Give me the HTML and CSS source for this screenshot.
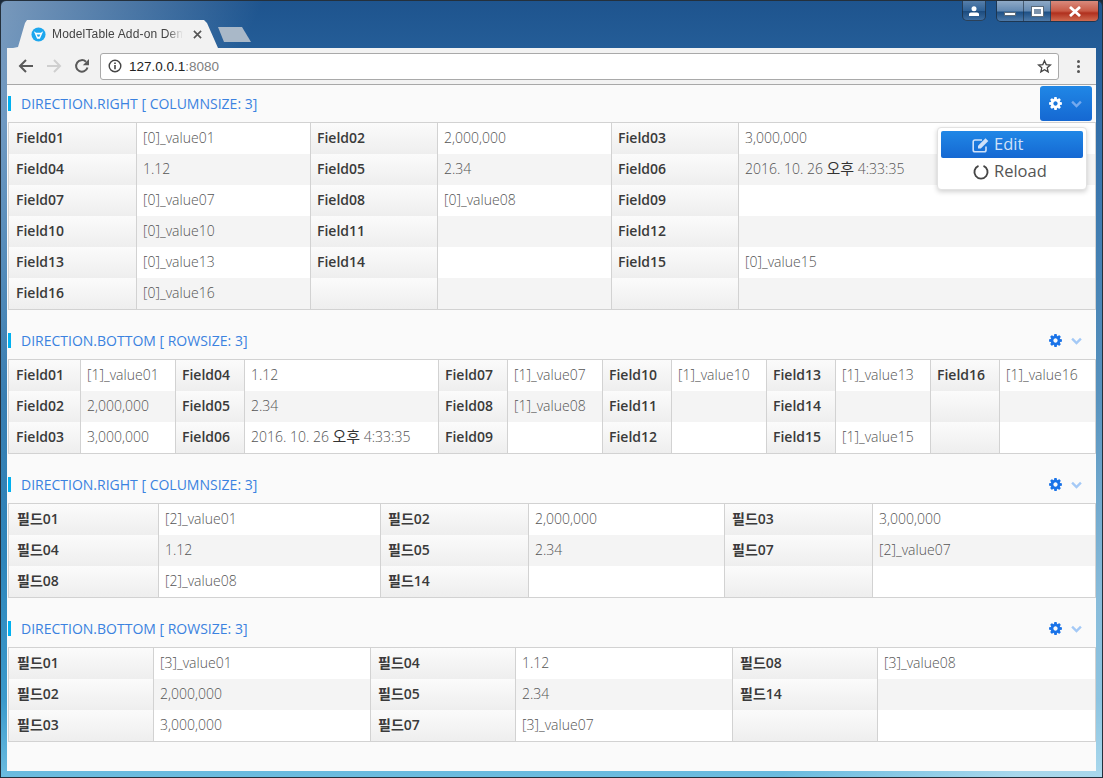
FILE: index.html
```html
<!DOCTYPE html>
<html lang="ko">
<head>
    <meta charset="UTF-8">
    <title>ModelTable Add-on Demo</title>
    <link rel="stylesheet" href="styles.css">
</head>
<body>
    <svg class="defs" width="0" height="0">
        <symbol id="cog" viewBox="0 0 1792 1792"><path d="M1152 896q0-106-75-181t-181-75-181 75-75 181 75 181 181 75 181-75 75-181zm512-109v222q0 12-8 23t-20 13l-185 28q-19 54-39 91 35 50 107 138 10 12 10 25t-9 23q-27 37-99 108t-94 71q-12 0-26-9l-138-108q-44 23-91 38-16 136-29 186-7 28-36 28h-222q-14 0-24.500-8.500t-11.500-21.500l-28-184q-49-16-90-37l-141 107q-10 9-25 9-14 0-25-11-126-114-165-168-7-10-7-23 0-12 8-23 15-21 51-66.500t54-70.500q-27-50-41-99l-183-27q-13-2-21-12.500t-8-23.500v-222q0-12 8-23t19-13l186-28q14-46 39-92-40-57-107-138-10-12-10-24 0-10 9-23 26-36 98.500-107.500t94.500-71.500q13 0 26 10l138 107q44-23 91-38 16-136 29-186 7-28 36-28h222q14 0 24.500 8.500t11.500 21.500l28 184q49 16 90 37l142-107q9-9 24-9 13 0 25 10 129 119 165 170 7 8 7 22 0 12-8 23-15 21-51 66.500t-54 70.500q26 50 41 98l183 28q13 2 21 12.500t8 23.500z"/></symbol>
        <symbol id="chev" viewBox="0 0 12 8"><path d="M1.200 1.500 6 6.300l4.800-4.800" fill="none" stroke="currentColor" stroke-width="2.600"/></symbol>
    </svg>

    <div class="window">
        <div class="titlebar">
            <div class="tab">
                <svg class="favicon" viewBox="0 0 16 16"><circle cx="8" cy="8" r="7.500" fill="#1da7ee"/><path d="M3 4.500 5.500 6h5L13 4.500 11.500 8 9.500 12.500h-3L4.500 8z" fill="#fff"/><path d="M6 8h4L8.800 10.500H7.200z" fill="#1da7ee"/></svg>
                <span class="tab-title">ModelTable Add-on Demo</span>
                <svg class="tab-close" viewBox="0 0 10 10"><path d="M1 1l8 8M9 1l-8 8" stroke="#555" stroke-width="1.800"/></svg>
            </div>
            <div class="newtab"></div>
            <div class="winctl">
                <div class="wbtn user">
                    <svg viewBox="0 0 12 10" width="12" height="10"><circle cx="6" cy="2.700" r="2.500" fill="#fff"/><path d="M1 10V8q0-1.500 2-1.500h6q2 0 2 1.500v2z" fill="#fff"/></svg>
                </div>
                <div class="wgroup">
                    <div class="wbtn min"><i></i></div>
                    <div class="wbtn max"><i></i></div>
                    <div class="wbtn close">
                        <svg viewBox="0 0 14 11" width="14" height="11"><path d="M2 1l10 9M12 1 2 10" stroke="#fff" stroke-width="2.800"/></svg>
                    </div>
                </div>
            </div>
        </div>

        <div class="browser">
            <div class="toolbar">
                <svg class="navicon" viewBox="0 0 16 16"><path d="M15 8H2.500M8 2 2 8l6 6" fill="none" stroke="#5a5a5a" stroke-width="2"/></svg>
                <svg class="navicon" viewBox="0 0 16 16"><path d="M1 8h12.500M8 2l6 6-6 6" fill="none" stroke="#cfcfcf" stroke-width="2"/></svg>
                <svg class="navicon last" viewBox="0 0 16 16"><path d="M13.500 9.500A5.800 5.800 0 1 1 12 3.800" fill="none" stroke="#5a5a5a" stroke-width="2"/><path d="M15 1v6.200H8.800z" fill="#5a5a5a"/></svg>
                <div class="omnibox">
                    <svg class="info" viewBox="0 0 14 14"><circle cx="7" cy="7" r="5.800" fill="none" stroke="#444" stroke-width="1.400"/><path d="M7 6v4.200M7 3.400v1.500" stroke="#444" stroke-width="1.600"/></svg>
                    <span class="url">127.0.0.1<span class="port">:8080</span></span>
                    <svg class="star" viewBox="0 0 16 16"><path d="M8 1.800l1.800 4.200 4.500.4-3.400 3 1 4.400L8 11.500l-3.900 2.300 1-4.400-3.400-3 4.500-.4z" fill="none" stroke="#444" stroke-width="1.400"/></svg>
                </div>
                <div class="dots"><i></i><i></i><i></i></div>
            </div>

            <div class="page">
                <section class="block first">
                    <header class="block-head">
                        <h2 class="block-title">DIRECTION.RIGHT [ COLUMNSIZE: 3]</h2>
                        <div class="tools on">
                            <svg class="ico-cog"><use href="#cog"/></svg>
                            <svg class="ico-chev"><use href="#chev"/></svg>
                        </div>
                    </header>
                    <div class="menu">
                        <div class="menu-item active">
                            <svg viewBox="0 0 18 16" width="18" height="16"><path d="M14 9.500V13q0 1.800-1.800 1.800H3q-1.800 0-1.800-1.800V4.800Q1.200 3 3 3h7" fill="none" stroke="currentColor" stroke-width="1.600"/><path d="M6 11.500V8.800L13.500 1.300 16.300 4 8.800 11.500z" fill="currentColor"/></svg>
                            <span>Edit</span>
                        </div>
                        <div class="menu-item">
                            <svg viewBox="0 0 18 16" width="18" height="16"><path d="M11.500 1.900a6.600 6.600 0 1 1-5 0" fill="none" stroke="#444" stroke-width="1.900"/></svg>
                            <span>Reload</span>
                        </div>
                    </div>
                    <table class="grid g-a">
                        <colgroup><col class="w128"><col class="w174"><col class="w127"><col class="w174"><col class="w127"><col class="w356"></colgroup>
                        <tr><th>Field01</th><td>[0]_value01</td><th>Field02</th><td>2,000,000</td><th>Field03</th><td>3,000,000</td></tr>
                        <tr><th>Field04</th><td>1.12</td><th>Field05</th><td>2.34</td><th>Field06</th><td>2016. 10. 26 <span class="ko">오후</span> 4:33:35</td></tr>
                        <tr><th>Field07</th><td>[0]_value07</td><th>Field08</th><td>[0]_value08</td><th>Field09</th><td></td></tr>
                        <tr><th>Field10</th><td>[0]_value10</td><th>Field11</th><td></td><th>Field12</th><td></td></tr>
                        <tr><th>Field13</th><td>[0]_value13</td><th>Field14</th><td></td><th>Field15</th><td>[0]_value15</td></tr>
                        <tr><th>Field16</th><td>[0]_value16</td><th></th><td></td><th></th><td></td></tr>
                    </table>
                </section>

                <section class="block">
                    <header class="block-head">
                        <h2 class="block-title">DIRECTION.BOTTOM [ ROWSIZE: 3]</h2>
                        <div class="tools">
                            <svg class="ico-cog"><use href="#cog"/></svg>
                            <svg class="ico-chev"><use href="#chev"/></svg>
                        </div>
                    </header>
                    <table class="grid g-b">
                        <colgroup><col class="w72"><col class="w95"><col class="w69"><col class="w194"><col class="w69"><col class="w95"><col class="w69"><col class="w95"><col class="w69"><col class="w95"><col class="w69"><col class="w95"></colgroup>
                        <tr><th>Field01</th><td>[1]_value01</td><th>Field04</th><td>1.12</td><th>Field07</th><td>[1]_value07</td><th>Field10</th><td>[1]_value10</td><th>Field13</th><td>[1]_value13</td><th>Field16</th><td>[1]_value16</td></tr>
                        <tr><th>Field02</th><td>2,000,000</td><th>Field05</th><td>2.34</td><th>Field08</th><td>[1]_value08</td><th>Field11</th><td></td><th>Field14</th><td></td><th></th><td></td></tr>
                        <tr><th>Field03</th><td>3,000,000</td><th>Field06</th><td>2016. 10. 26 <span class="ko">오후</span> 4:33:35</td><th>Field09</th><td></td><th>Field12</th><td></td><th>Field15</th><td>[1]_value15</td><th></th><td></td></tr>
                    </table>
                </section>

                <section class="block">
                    <header class="block-head">
                        <h2 class="block-title">DIRECTION.RIGHT [ COLUMNSIZE: 3]</h2>
                        <div class="tools">
                            <svg class="ico-cog"><use href="#cog"/></svg>
                            <svg class="ico-chev"><use href="#chev"/></svg>
                        </div>
                    </header>
                    <table class="grid g-c hangul">
                        <colgroup><col class="w150"><col class="w222"><col class="w148"><col class="w196"><col class="w148"><col class="w222"></colgroup>
                        <tr><th>필드01</th><td>[2]_value01</td><th>필드02</th><td>2,000,000</td><th>필드03</th><td>3,000,000</td></tr>
                        <tr><th>필드04</th><td>1.12</td><th>필드05</th><td>2.34</td><th>필드07</th><td>[2]_value07</td></tr>
                        <tr><th>필드08</th><td>[2]_value08</td><th>필드14</th><td></td><th></th><td></td></tr>
                    </table>
                </section>

                <section class="block">
                    <header class="block-head">
                        <h2 class="block-title">DIRECTION.BOTTOM [ ROWSIZE: 3]</h2>
                        <div class="tools">
                            <svg class="ico-cog"><use href="#cog"/></svg>
                            <svg class="ico-chev"><use href="#chev"/></svg>
                        </div>
                    </header>
                    <table class="grid g-d hangul">
                        <colgroup><col class="w145"><col class="w217"><col class="w145"><col class="w217"><col class="w145"><col class="w217"></colgroup>
                        <tr><th>필드01</th><td>[3]_value01</td><th>필드04</th><td>1.12</td><th>필드08</th><td>[3]_value08</td></tr>
                        <tr><th>필드02</th><td>2,000,000</td><th>필드05</th><td>2.34</td><th>필드14</th><td></td></tr>
                        <tr><th>필드03</th><td>3,000,000</td><th>필드07</th><td>[3]_value07</td><th></th><td></td></tr>
                    </table>
                </section>
            </div>
        </div>
    </div>
</body>
</html>
```

FILE: styles.css
```css
* {
    box-sizing: border-box;
}
html, body {
    margin: 0;
    height: 100%;
    overflow: hidden;
}
body {
    font-family: "Open Sans", "Noto Sans CJK KR", sans-serif;
    color: #333;
    background-color: #1b2a3a;
}
.defs {
    position: absolute;
}

/* window frame */
.window {
    height: 778px;
    padding: 0 6px 6px 6px;
    display: flex;
    flex-direction: column;
    border: 1px solid #24303c;
    border-radius: 6px 6px 0 0;
    background:
        linear-gradient(115deg, rgba(255,255,255,0.4) 0, rgba(255,255,255,0) 18%, rgba(255,255,255,0) 78%, rgba(255,255,255,0.42) 94%),
        linear-gradient(180deg, #1e548e 0, #2e6ba6 120px, #1f6ea8 400px, #3b9acb 700px, #6dbde0 778px);
}
.titlebar {
    height: 47px;
    flex: none;
    display: flex;
    align-items: flex-end;
    padding-left: 6px;
}
.tab {
    width: 205px;
    height: 28px;
    display: flex;
    align-items: center;
    padding: 0 16px 0 18px;
    background-color: #f2f2f2;
    clip-path: polygon(0 100%, 5px 96%, 12px 3px, 14px 0, 191px 0, 194px 3px, 205px 100%);
}
.favicon {
    width: 15px;
    height: 15px;
    flex: none;
    margin: 0 6px 0 0;
}
.tab-title {
    flex: 1;
    overflow: hidden;
    white-space: nowrap;
    font-family: "Liberation Sans", sans-serif;
    font-size: 12px;
    letter-spacing: 0.150px;
    color: #444;
    margin-right: 10px;
    -webkit-mask-image: linear-gradient(90deg, #000 88%, transparent);
    mask-image: linear-gradient(90deg, #000 88%, transparent);
}
.tab-close {
    width: 9px;
    height: 9px;
    flex: none;
}
.newtab {
    width: 33px;
    height: 15px;
    margin: 0 0 6px 0;
    background-color: #a9b8c8;
    clip-path: polygon(0 0, 24px 0, 33px 100%, 6px 100%);
}
.winctl {
    margin-left: auto;
    margin-right: -3px;
    align-self: flex-start;
    display: flex;
    gap: 10px;
}
.wgroup {
    display: flex;
    border: 1px solid rgba(30,45,60,0.75);
    border-top: 0;
    border-radius: 0 0 5px 5px;
    overflow: hidden;
}
.wbtn {
    height: 20px;
    display: flex;
    align-items: center;
    justify-content: center;
    background: linear-gradient(180deg, rgba(255,255,255,0.5), rgba(255,255,255,0.3) 50%, rgba(0,0,0,0.08) 55%, rgba(255,255,255,0.2));
}
.user {
    width: 24px;
    border: 1px solid rgba(30,45,60,0.75);
    border-top: 0;
    border-radius: 0 0 5px 5px;
    background: linear-gradient(180deg, rgba(255,255,255,0.25), rgba(255,255,255,0.08) 50%, rgba(0,0,0,0.12) 55%, rgba(255,255,255,0.12));
}
.min, .max {
    width: 27px;
    border-right: 1px solid rgba(30,45,60,0.6);
}
.min i {
    display: block;
    width: 12px;
    height: 4px;
    margin-top: 6px;
    background-color: #fff;
    border: 1px solid #5a6a7a;
}
.max i {
    display: block;
    width: 11px;
    height: 9px;
    background-color: #7c93ac;
    border: 2px solid #fff;
    outline: 1px solid #5a6a7a;
}
.close {
    width: 47px;
    background: linear-gradient(180deg, #d98a7c, #c85a46 50%, #b0301e 60%, #cf6a50);
}

/* browser chrome */
.browser {
    flex: 1;
    min-height: 0;
    display: flex;
    flex-direction: column;
    background-color: #fafafa;
}
.toolbar {
    height: 37px;
    flex: none;
    display: flex;
    align-items: center;
    padding: 0 0 0 11px;
    background-color: #f2f2f2;
    border-bottom: 1px solid #a8a8a8;
}
.navicon {
    width: 16px;
    height: 16px;
    flex: none;
    margin-right: 12px;
}
.navicon.last {
    margin-right: 10px;
}
.omnibox {
    width: 959px;
    height: 27px;
    display: flex;
    align-items: center;
    padding: 0 6px 0 7px;
    background-color: #fff;
    border: 1px solid #a9a9a9;
    border-radius: 3px;
}
.info {
    width: 14px;
    height: 14px;
    flex: none;
}
.url {
    margin-left: 7px;
    font-family: "Liberation Sans", sans-serif;
    font-size: 13.500px;
    color: #222;
}
.port {
    color: #808080;
}
.star {
    width: 15px;
    height: 15px;
    margin-left: auto;
}
.dots {
    margin-left: 18px;
    display: flex;
    flex-direction: column;
    gap: 2px;
}
.dots i {
    width: 3px;
    height: 3px;
    border-radius: 50%;
    background-color: #555;
}

/* page */
.page {
    flex: 1;
    padding-left: 1px;
    overflow: hidden;
}
.block {
    margin-top: 12px;
    position: relative;
}
.block.first {
    margin-top: 0;
}
.block-head {
    height: 37px;
    display: flex;
    align-items: center;
    justify-content: space-between;
    padding-right: 4px;
}
.block-title {
    margin: 0;
    padding-left: 10px;
    border-left: 3px solid #00b0f0;
    font-size: 14px;
    font-weight: 400;
    line-height: 15px;
    color: #3b82e0;
}
.tools {
    width: 52px;
    height: 35px;
    display: flex;
    align-items: center;
    padding-left: 8px;
    color: #1a73e8;
    border-radius: 3px;
}
.tools.on {
    color: #fff;
    background: linear-gradient(180deg, #2087e6, #1568d2);
}
.ico-cog {
    width: 15px;
    height: 15px;
    fill: currentColor;
}
.ico-chev {
    width: 11px;
    height: 8px;
    margin-left: 8px;
    color: #a4c9f6;
}
.tools.on .ico-chev {
    color: #74a9ee;
}
.menu {
    position: absolute;
    top: 42px;
    left: 929px;
    width: 150px;
    height: 63px;
    padding: 3px;
    z-index: 2;
    background-color: #fff;
    border: 1px solid #e2e2e2;
    border-radius: 4px;
    box-shadow: 0 2px 5px rgba(0,0,0,0.18);
}
.menu-item {
    height: 27px;
    display: flex;
    align-items: center;
    gap: 4px;
    padding-left: 31px;
    font-size: 16.500px;
    color: #555;
    border-radius: 2px;
}
.menu-item span {
    margin-top: -2px;
}
.menu-item.active {
    color: #d0e1f9;
    background: linear-gradient(180deg, #2087e6, #1568d2);
}

/* field tables */
.grid {
    width: 1088px;
    table-layout: fixed;
    border-collapse: separate;
    border-spacing: 0;
    border: 1px solid #d2d2d2;
}
.grid th, .grid td {
    height: 31px;
    padding: 0 6px 2px;
    white-space: nowrap;
    overflow: hidden;
    border-right: 1px solid #d2d2d2;
    font-size: 14px;
    line-height: 19px;
    text-align: left;
}
.grid tr > :last-child {
    border-right: 0;
}
.grid th {
    font-weight: 600;
    color: #3a3a3a;
    background: linear-gradient(180deg, #fbfbfb, #eeeeee);
}
.grid th:first-child {
    padding-left: 7px;
}
.hangul th {
    padding-left: 7px;
}
.hangul th:first-child {
    padding-left: 8px;
}
.grid td {
    font-weight: 300;
    color: #555;
    background-color: #fff;
}
.grid tr:nth-child(even) td {
    background-color: #f4f4f4;
}
.ko {
    font-weight: 400;
    font-size: 15px;
    color: #333;
}
.w72 { width: 72px; }
.w69 { width: 69px; }
.w95 { width: 95px; }
.w127 { width: 127px; }
.w128 { width: 128px; }
.w145 { width: 145px; }
.w148 { width: 148px; }
.w150 { width: 150px; }
.w174 { width: 174px; }
.w194 { width: 194px; }
.w196 { width: 196px; }
.w217 { width: 217px; }
.w222 { width: 222px; }
.w356 { width: 356px; }
```
